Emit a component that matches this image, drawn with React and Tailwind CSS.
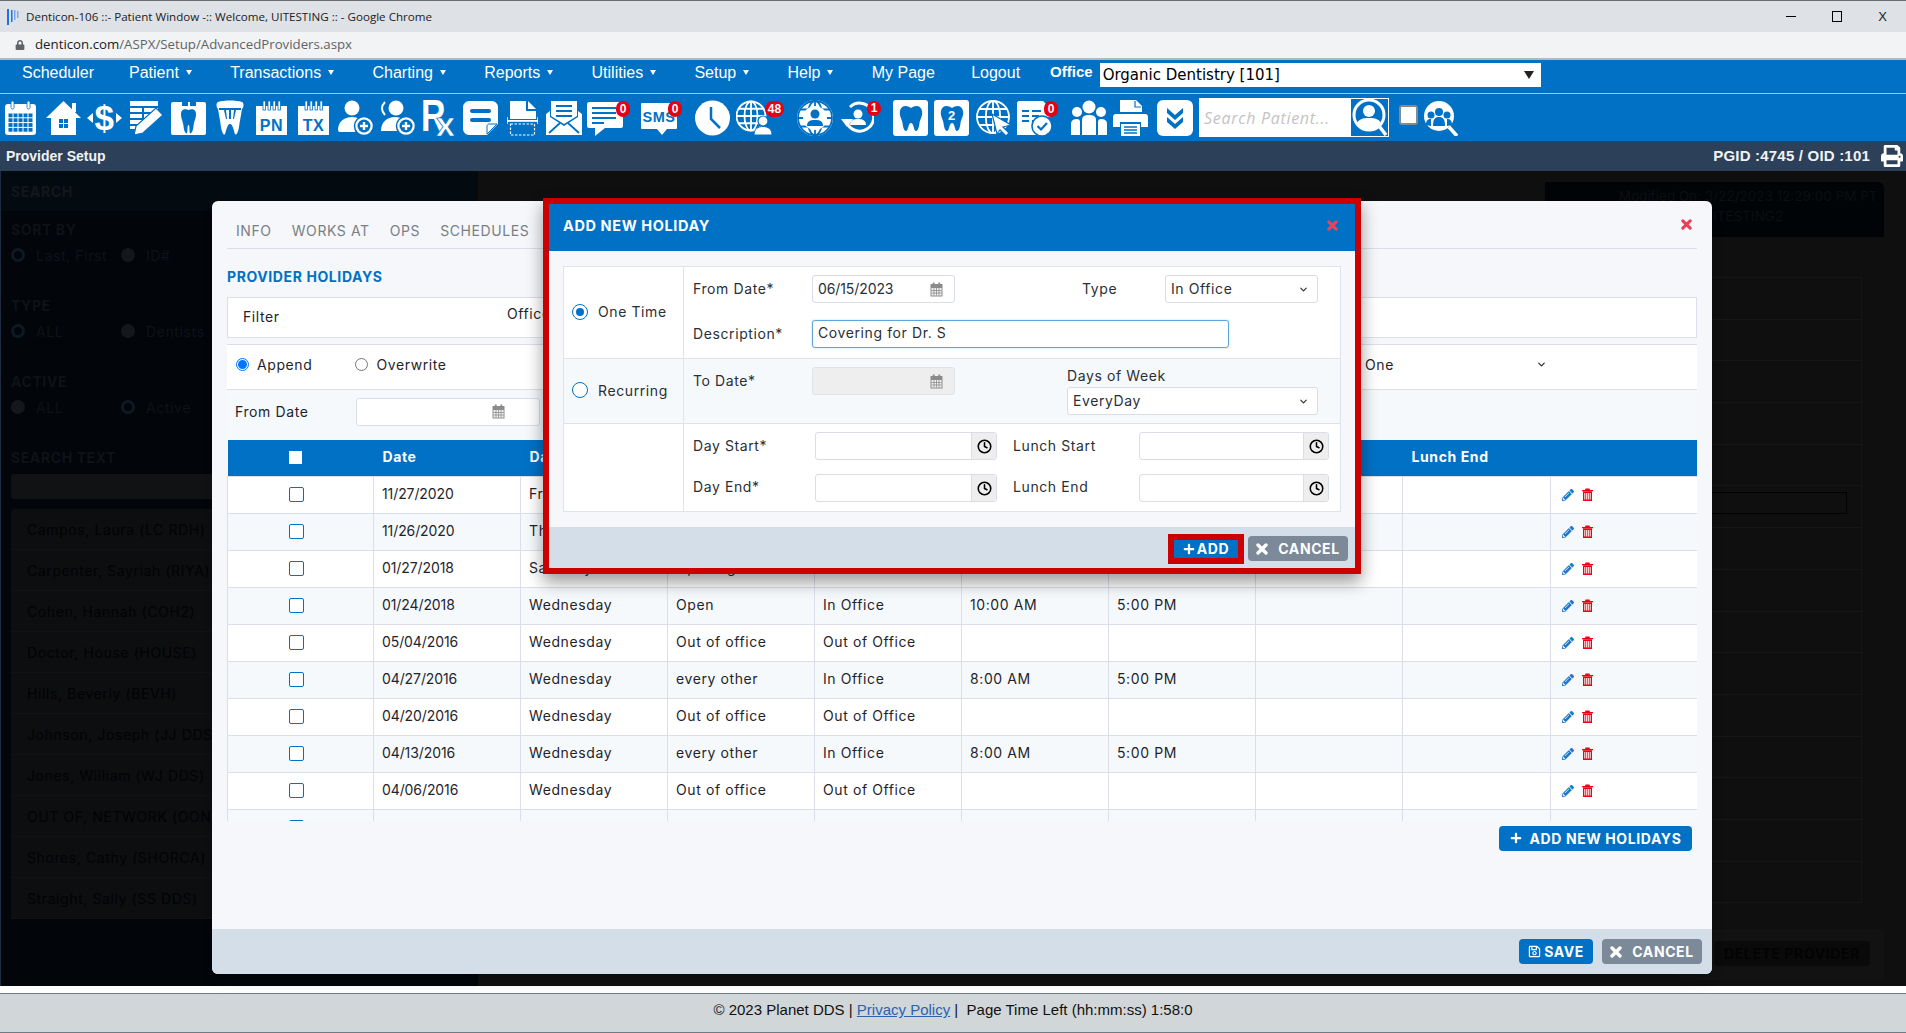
import { Clock, ChevronDown } from 'lucide-react';
import { FaLock, FaPencilAlt, FaPlus, FaRegSave, FaPrint } from 'react-icons/fa';

const BLUE = '#0071c5';

const ROWS = [
  ['11/27/2020', 'Friday', 'Thanksgiving', 'Out of Office', '', ''],
  ['11/26/2020', 'Thursday', 'Thanksgiving', 'Out of Office', '', ''],
  ['01/27/2018', 'Saturday', 'Opening', 'In Office', '9:00 AM', '1:00 PM'],
  ['01/24/2018', 'Wednesday', 'Open', 'In Office', '10:00 AM', '5:00 PM'],
  ['05/04/2016', 'Wednesday', 'Out of office', 'Out of Office', '', ''],
  ['04/27/2016', 'Wednesday', 'every other', 'In Office', '8:00 AM', '5:00 PM'],
  ['04/20/2016', 'Wednesday', 'Out of office', 'Out of Office', '', ''],
  ['04/13/2016', 'Wednesday', 'every other', 'In Office', '8:00 AM', '5:00 PM'],
  ['04/06/2016', 'Wednesday', 'Out of office', 'Out of Office', '', ''],
  ['03/30/2016', 'Wednesday', 'every other', 'In Office', '8:00 AM', '5:00 PM'],
];

const NAV = [
  ['Patient', true],
  ['Transactions', true],
  ['Charting', true],
  ['Reports', true],
  ['Utilities', true],
  ['Setup', true],
  ['Help', true],
  ['My Page', false],
];

const PROVIDERS = [
  'Campos, Laura (LC RDH)',
  'Carpenter, Sayriah (RIYA)',
  'Cohen, Hannah (COH2)',
  'Doctor, House (HOUSE)',
  'Hills, Beverly (BEVH)',
  'Johnson, Joseph (JJ DDS)',
  'Jones, William (WJ DDS)',
  'OUT OF, NETWORK (OON)',
  'Shores, Cathy (SHORCA)',
  'Straight, Sally (SS DDS)',
];

function Ico({ w, className = '', children }) {
  return (
    <svg width={w} height={36} viewBox={`0 0 ${w} 36`} fill="#fff" className={`shrink-0 ${className}`}>
      {children}
    </svg>
  );
}

function Badge({ text, className = '' }) {
  return (
    <span className={`absolute flex h-[14px] min-w-[14px] items-center justify-center rounded-full bg-[#e60012] px-[2px] font-['Liberation_Sans',Arial,sans-serif] text-[12px] font-bold leading-none tracking-normal text-white ${className}`}>
      {text}
    </span>
  );
}

function XIcon({ size = 11, className = '' }) {
  return (
    <svg width={size} height={size} viewBox="0 0 12 12" className={`shrink-0 ${className}`}>
      <path d="M2 2L10 10M10 2L2 10" fill="none" stroke="currentColor" strokeWidth="3.400" strokeLinecap="round" />
    </svg>
  );
}

function TrashIcon() {
  return (
    <svg width="11" height="13" viewBox="0 0 11 13" className="shrink-0">
      <path d="M3.500 0.500H7.500L8 2H11V3.300H0V2H3Z" fill="#f00014" />
      <path d="M1 3.300H10V13H1Z" fill="#f00014" />
      <path d="M2.800 5V11.500M4.700 5V11.500M6.300 5V11.500M8.200 5V11.500" stroke="#fff" strokeWidth="1" />
    </svg>
  );
}

const TOOTH = 'M18 8C14 5 8 5 7 11C6 16 9 19 9.500 23C10 27 11 31 13 31C15.500 31 15 23 18 23C21 23 20.500 31 23 31C25 31 26 27 26.500 23C27 19 30 16 29 11C28 5 22 5 18 8Z';

function CalendarIco(props) {
  const cells = [];
  for (let r = 0; r < 4; r++) {
    for (let c = 0; c < 5; c++) {
      cells.push(<rect key={`${r}-${c}`} x={4.5 + c * 5} y={13.500 + r * 4.800} width="4" height="3.800" fill={BLUE} />);
    }
  }
  return (
    <Ico w={33} {...props}>
      <rect x="1" y="4" width="31" height="31" rx="3" />
      {cells}
      <rect x="7" y="1" width="3" height="8" rx="1.500" stroke={BLUE} strokeWidth="0.800" />
      <rect x="23" y="1" width="3" height="8" rx="1.500" stroke={BLUE} strokeWidth="0.800" />
    </Ico>
  );
}

function PageIco({ label, ...props }) {
  return (
    <Ico w={33} {...props}>
      <path d="M1 6H32V35H1Z" />
      {[7, 12, 17, 22].map((x) => (
        <rect key={x} x={x + 1} y="1" width="2.500" height="9" stroke={BLUE} strokeWidth="0.800" />
      ))}
      <text x="16.500" y="31" textAnchor="middle" fontSize="16" fontWeight="700" fontFamily="Liberation Sans" fill={BLUE}>
        {label}
      </text>
    </Ico>
  );
}

function PersonPlus({ cx, ...rest }) {
  return (
    <g {...rest}>
      <circle cx={cx} cy="26" r="9.500" stroke={BLUE} strokeWidth="1.500" />
      <circle cx={cx} cy="26" r="6.500" fill={BLUE} />
      <rect x={cx - 4} y="24.800" width="8" height="2.400" />
      <rect x={cx - 1.200} y="22" width="2.400" height="8" />
    </g>
  );
}

function GlobeLines({ cx, cy, r, stroke = '#fff', sw = 1.800 }) {
  return (
    <g fill="none" stroke={stroke} strokeWidth={sw}>
      <circle cx={cx} cy={cy} r={r} />
      <ellipse cx={cx} cy={cy} rx={r * 0.45} ry={r} />
      <path d={`M${cx} ${cy - r}V${cy + r}M${cx - r} ${cy}H${cx + r}M${cx - r * 0.86} ${cy - r * 0.5}H${cx + r * 0.86}M${cx - r * 0.86} ${cy + r * 0.5}H${cx + r * 0.86}`} />
    </g>
  );
}

function ToolBar() {
  return (
    <div className="flex h-[47px] shrink-0 items-center bg-[#0071c5]">
      <CalendarIco className="ml-[4px]" />
      {/* home */}
      <Ico w={35} className="ml-[9px]">
        <path d="M17.500 1L35 18H30V35H5V18H0Z" />
        <rect x="26" y="3" width="4" height="9" />
        <path d="M13 19H22V28H13Z" fill={BLUE} />
        <path d="M17 19H18V28H17ZM13 23H22V24H13Z" />
      </Ico>
      {/* billing */}
      <Ico w={35} className="ml-[6px]">
        <text x="17.500" y="30" textAnchor="middle" fontSize="35" fontWeight="700" fontFamily="Liberation Sans">$</text>
        <path d="M0 18L6 13V23ZM35 18L29 13V23Z" />
      </Ico>
      {/* ledger with pencil */}
      <Ico w={36} className="ml-[7px]">
        <path d="M1 1H29V6H1ZM1 8H13V12H1ZM15 8H29V12H15ZM1 14H13V18H1ZM15 14H22L19 18H15ZM1 20H13V24H1ZM1 26H8V29H1Z" />
        <path d="M5 35L7 26L27 8L34 15L14 33Z" stroke={BLUE} strokeWidth="1.200" />
      </Ico>
      {/* tooth chart */}
      <Ico w={35} className="ml-[6px]">
        <rect y="2" width="35" height="33" rx="2" />
        <path d="M11 2H17V6H11ZM19 2H25V6H19Z" fill={BLUE} />
        <path d="M17.500 10C15 8.500 10 8.500 10 14C10 19 12 21 12.500 26C13 32 15 34 16 33C17 31 16 25 17.500 25C19 25 18 31 19 33C20 34 22 32 22.500 26C23 21 25 19 25 14C25 8.500 20 8.500 17.500 10Z" fill={BLUE} />
      </Ico>
      {/* crown */}
      <Ico w={28} className="ml-[10px]">
        <path d="M2 2C8 0 20 0 26 2C28 3 28 7 26 9C25 15 24 20 23 27C22 33 20 36 19 34C18 32 17 24 14 24C11 24 10 32 9 34C8 36 6 33 5 27C4 20 3 15 2 9C0 7 0 3 2 2Z" />
        <path d="M3 8H25V10H3ZM8 10L10 19H11L10 10ZM13 10V19H15V10ZM18 10L17 19H18L20 10Z" fill={BLUE} />
      </Ico>
      <PageIco label="PN" className="ml-[11px]" />
      <PageIco label="TX" className="ml-[9px]" />
      {/* add patient */}
      <Ico w={36} className="ml-[8px]">
        <circle cx="14" cy="8" r="7.500" />
        <path d="M0 30C0 22 6 17 14 17C20 17 24 20 26 24L16 30Z" />
        <rect y="28" width="18" height="4" rx="2" />
        <PersonPlus cx={26} />
      </Ico>
      {/* add family */}
      <Ico w={37} className="ml-[5px]">
        <circle cx="17" cy="8" r="7.500" />
        <path d="M6 2C2 6 2 11 6 15" fill="none" stroke="#fff" strokeWidth="2" />
        <path d="M2 31C2 22 8 17 16 17C22 17 26 20 28 24L18 31Z" />
        <PersonPlus cx={27} />
      </Ico>
      {/* rx */}
      <Ico w={34} className="ml-[5px]">
        <text x="0" y="31" fontSize="44" fontWeight="700" fontFamily="Liberation Sans" textLength="25" lengthAdjust="spacingAndGlyphs">R</text>
        <text x="15" y="35.500" fontSize="34" fontWeight="700" fontFamily="Liberation Sans" stroke={BLUE} strokeWidth="0.700">x</text>
      </Ico>
      {/* note */}
      <Ico w={35} className="ml-[8px]">
        <path d="M6 1H29C32 1 35 4 35 7V24L24 35H6C3 35 0 32 0 29V7C0 4 3 1 6 1Z" />
        <rect x="7" y="9" width="21" height="4" rx="2" fill={BLUE} />
        <rect x="7" y="18" width="21" height="4" rx="2" fill={BLUE} />
        <path d="M24 34V26C24 25 25 24 26 24H34Z" fill="#fff" stroke={BLUE} strokeWidth="1" />
      </Ico>
      {/* scan */}
      <Ico w={31} className="ml-[9px]">
        <path d="M3 1H19V11H29V19H3ZM21 1L29 9H21Z" />
        <rect y="20" width="31" height="1.800" />
        <path d="M0 17V24M31 17V24" stroke="#fff" strokeWidth="1.500" />
        <rect x="3.500" y="24" width="24" height="11" fill="none" stroke="#fff" strokeWidth="1.200" strokeDasharray="2.500 1.500" />
      </Ico>
      {/* mail */}
      <Ico w={36} className="ml-[8px]">
        <path d="M5 1H31V16L18 24L5 16Z" />
        <path d="M10 6H26M10 11H26M10 16H26" stroke={BLUE} strokeWidth="1.800" />
        <path d="M0 14L4 11V17L18 26L32 17V11L36 14V35H0Z" />
        <path d="M3 33L14 23M33 33L22 23" stroke={BLUE} strokeWidth="1.800" />
      </Ico>
      {/* messages */}
      <div className="relative ml-[5px] shrink-0">
        <Ico w={36}>
          <path d="M2 2H34C35 2 36 3 36 4V26C36 27 35 28 34 28H18L8 36V28H2C1 28 0 27 0 26V4C0 3 1 2 2 2Z" />
          <path d="M5 8H29M5 13H29M5 18H29M5 23H17" stroke={BLUE} strokeWidth="2" />
        </Ico>
        <Badge text="0" className="left-[29px] top-[1px] h-[16px] w-[14px]" />
      </div>
      {/* sms */}
      <div className="relative ml-[18px] shrink-0">
        <Ico w={36}>
          <path d="M1 3H35C35.500 3 36 3.500 36 4V28C36 28.500 35.500 29 35 29H26L21 35L16 29H1C0.500 29 0 28.500 0 28V4C0 3.500 0.500 3 1 3Z" />
          <text x="18" y="22" textAnchor="middle" fontSize="14.500" fontWeight="700" fontFamily="Liberation Sans" fill={BLUE}>SMS</text>
        </Ico>
        <Badge text="0" className="left-[27px] top-[1px] h-[16px] w-[14px]" />
      </div>
      {/* clock */}
      <Ico w={35} className="ml-[18px]">
        <circle cx="17.500" cy="18" r="17.500" />
        <path d="M16 7V19L25 28" fill="none" stroke={BLUE} strokeWidth="2.500" />
      </Ico>
      {/* web patient */}
      <div className="relative ml-[6px] shrink-0">
        <Ico w={36}>
          <GlobeLines cx={15} cy={16} r={14.500} />
          <circle cx="27" cy="21" r="5" stroke={BLUE} strokeWidth="1.200" />
          <path d="M18 35C18 29 22 26.500 27 26.500C32 26.500 36 29 36 35Z" stroke={BLUE} strokeWidth="1" />
        </Ico>
        <Badge text="48" className="left-[29px] top-[1px] h-[16px] w-[19px] !text-[12px]" />
      </div>
      {/* web user */}
      <Ico w={36} className="ml-[25px]">
        <circle cx="18" cy="18" r="18" />
        <GlobeLines cx={18} cy={18} r={17} stroke={BLUE} sw={1.800} />
        <circle cx="18" cy="18" r="12" />
        <circle cx="18" cy="14" r="4.500" fill={BLUE} />
        <path d="M10 26C10 21 13 20 18 20C23 20 26 21 26 26Z" fill={BLUE} />
      </Ico>
      {/* recall */}
      <div className="relative ml-[8px] shrink-0">
        <Ico w={33}>
          <path d="M6 23A14 14 0 1 0 9 7" fill="none" stroke="#fff" strokeWidth="3" />
          <path d="M0 19H12L6 27Z" />
          <circle cx="17" cy="14" r="4.500" />
          <path d="M9 25C9 20 13 19 17 19C21 19 25 20 25 25Z" />
        </Ico>
        <Badge text="1" className="left-[26px] top-[1px] h-[15px] w-[12px]" />
      </div>
      {/* tooth */}
      <Ico w={35} className="ml-[19px]">
        <rect y="0" width="35" height="36" rx="3" />
        <path d={TOOTH} fill={BLUE} />
      </Ico>
      {/* tooth 2 */}
      <Ico w={35} className="ml-[6px]">
        <rect y="0" width="35" height="36" rx="3" />
        <path d={TOOTH} fill={BLUE} />
        <text x="18" y="20" textAnchor="middle" fontSize="13" fontWeight="700" fontFamily="Liberation Sans">2</text>
      </Ico>
      {/* web cursor */}
      <Ico w={35} className="ml-[7px]">
        <GlobeLines cx={17} cy={17} r={16} />
        <path d="M16 14L35 25L27 27L33 33L30 36L24 30L21 34Z" stroke={BLUE} strokeWidth="1.200" />
      </Ico>
      {/* claims */}
      <div className="relative ml-[6px] shrink-0">
        <Ico w={36}>
          <path d="M2 1H26L34 9V17H22V35H2C1 35 0 34 0 33V3C0 2 1 1 2 1Z" />
          <rect x="0" y="18" width="24" height="17" />
          <path d="M5 11H12M15 11H24M5 16H12M15 16H22M5 21H12M15 21H20" stroke={BLUE} strokeWidth="2.200" />
          <circle cx="25" cy="26" r="10" stroke={BLUE} strokeWidth="1.500" />
          <path d="M20.500 26L24 29.500L30 23" fill="none" stroke={BLUE} strokeWidth="2.200" />
        </Ico>
        <Badge text="0" className="left-[27px] top-[1px] h-[16px] w-[14px]" />
      </div>
      {/* people */}
      <Ico w={36} className="ml-[18px]">
        <circle cx="6" cy="12" r="5" />
        <circle cx="30" cy="12" r="5" />
        <circle cx="18" cy="7" r="6.500" />
        <path d="M0 35V24C0 20 3 19 6 19C8 19 9 20 9 22V35Z" />
        <path d="M36 35V24C36 20 33 19 30 19C28 19 27 20 27 22V35Z" />
        <path d="M11 35V20C11 16 14 15 18 15C22 15 25 16 25 20V35Z" />
      </Ico>
      {/* print */}
      <Ico w={35} className="ml-[6px]">
        <path d="M7 0H23L29 6V12H7Z" />
        <path d="M22 1V7H28" fill="none" stroke={BLUE} strokeWidth="1.200" />
        <path d="M3 14H32C34 14 35 15 35 17V27H28V22H7V27H0V17C0 15 1 14 3 14Z" />
        <path d="M8 24H27V36H8Z" />
        <path d="M11 27H24M11 30H24M11 33H24" stroke={BLUE} strokeWidth="1.500" />
      </Ico>
      {/* more */}
      <Ico w={36} className="ml-[9px]">
        <rect y="0" width="36" height="36" rx="6" />
        <path d="M10 8L18 15L26 8V13L18 20L10 13Z" fill={BLUE} />
        <path d="M10 17L18 24L26 17V22L18 29L10 22Z" fill={BLUE} />
      </Ico>
      {/* patient search */}
      <div className="ml-[6px] flex h-[39px] w-[190px] shrink-0 items-center bg-white">
        <span className="flex-1 truncate pl-[5px] font-['Open_Sans',sans-serif] text-[16px] italic tracking-[0.7px] text-[#c4c4c4]">Search Patient...</span>
        <div className="mr-[1px] h-[37px] w-[37px] bg-[#0071c5]">
          <svg width="37" height="37" viewBox="0 0 37 37" fill="#fff">
            <circle cx="18" cy="16" r="15" fill="none" stroke="#fff" strokeWidth="3" />
            <circle cx="18" cy="12" r="6" />
            <path d="M6 25C7 20 12 19 18 19C24 19 29 20 30 25L24 30H12Z" />
            <path d="M28 27L35 36" stroke="#fff" strokeWidth="3.500" />
          </svg>
        </div>
      </div>
      <div className="ml-[10px] mb-[6px] h-[20px] w-[19px] shrink-0 rounded-[3px] border-2 border-[#7f8c96] bg-white" />
      {/* group search */}
      <Ico w={38} className="ml-[4px]">
        <circle cx="17" cy="16" r="15" />
        <circle cx="17" cy="12" r="4" fill={BLUE} />
        <circle cx="9" cy="15" r="3.500" fill={BLUE} />
        <circle cx="25" cy="15" r="3.500" fill={BLUE} />
        <path d="M11 26C11 19 13 17 17 17C21 17 23 19 23 26Z" fill={BLUE} />
        <path d="M4 25C4 20 6 19 9 19V26ZM30 25C30 20 28 19 25 19V26Z" fill={BLUE} />
        <path d="M27 27L35 36" stroke="#fff" strokeWidth="3.500" />
      </Ico>
    </div>
  );
}

function DimRadio({ label, on }) {
  return (
    <div className="flex h-[22px] w-[110px] items-center gap-[11px]">
      <span className={`h-[14px] w-[14px] shrink-0 rounded-full ${on ? 'border-[3px] border-[#0d1a24] bg-[#02050a]' : 'bg-[#14181c]'}`} />
      <span className="text-[#0f1216]">{label}</span>
    </div>
  );
}

function LeftPanel() {
  return (
    <div className="w-[478px] shrink-0 border-l border-[#1b2c40] bg-[#02050a] text-[14px] font-normal text-[#0f1216]">
      <div className="flex h-[40px] items-center bg-[#030a10] pl-[10px] font-bold text-[#12171c]">SEARCH</div>
      <div className="pl-[10px]">
        <div className="mt-[8px] h-[22px] font-bold leading-[22px]">SORT BY</div>
        <div className="mt-[3px] flex"><DimRadio label="Last, First" on /><DimRadio label="ID#" /></div>
        <div className="mt-[29px] h-[22px] font-bold leading-[22px]">TYPE</div>
        <div className="mt-[3px] flex"><DimRadio label="ALL" on /><DimRadio label="Dentists" /></div>
        <div className="mt-[29px] h-[22px] font-bold leading-[22px]">ACTIVE</div>
        <div className="mt-[3px] flex"><DimRadio label="ALL" /><DimRadio label="Active" on /></div>
        <div className="mt-[29px] h-[22px] font-bold leading-[22px]">SEARCH TEXT</div>
      </div>
      <div className="ml-[10px] mt-[5px] h-[25px] w-[450px] rounded-[3px] bg-[#101214]" />
      <div className="ml-[10px] mt-[10px] w-[450px] rounded-[4px] bg-[#0c0e10]">
        {PROVIDERS.map((p) => (
          <div key={p} className="flex h-[41px] items-center border-b border-[#101214] pl-[16px] text-[#020304]">{p}</div>
        ))}
      </div>
    </div>
  );
}

function RightPanel() {
  return (
    <div className="relative flex-1 bg-[#0f0f0f]">
      {/* top banner behind the modal */}
      <div className="absolute left-[1067px] top-[11px] flex h-[55px] w-[339px] flex-col justify-center rounded-tr-[6px] bg-[#010407] pb-[7px] pl-[74px] text-[13.500px] tracking-normal text-[#0c0e10]">
        <div>Modified On: 3/22/2023 12:29:00 PM PT</div>
        <div>Modified By: UITESTING2</div>
      </div>
      <div className="absolute left-[1234px] top-[106px] w-[150px] border-r border-b border-[#161616]">
        {[0, 1, 2, 3, 4, 5, 6, 7, 8, 9, 10, 11, 12, 13, 14].map((n) => (
          <div key={n} className="h-[41.700px] border-t border-[#161616]" />
        ))}
      </div>
      <div className="absolute left-[1230px] top-[321px] h-[22px] w-[139px] border border-[#020202]" />
      <div className="absolute left-[1200px] top-[758px] h-[51px] w-[206px] rounded-[4px] bg-[#121212]" />
      <div className="absolute left-[1236px] top-[770px] flex h-[25px] w-[156px] items-center justify-center rounded-[4px] bg-[#0a0a0a] text-[14px] font-bold text-[#030303]">DELETE PROVIDER</div>
    </div>
  );
}

function CalIcon({ className = '' }) {
  return (
    <svg width="13" height="15" viewBox="0 0 13 15" className={className}>
      <rect x="0.500" y="2" width="12" height="12.500" fill="#8b8b8b" rx="0.500" />
      <path d="M1.500 6H11.500V13.500H1.500Z" fill="#f2f2f2" />
      <path d="M1.500 8.500H11.500M1.500 11H11.500M4 6V13.500M6.500 6V13.500M9 6V13.500" stroke="#8b8b8b" strokeWidth="0.800" />
      <rect x="2.800" y="0.500" width="1.800" height="3.500" fill="#8b8b8b" />
      <rect x="8.400" y="0.500" width="1.800" height="3.500" fill="#8b8b8b" />
    </svg>
  );
}

function BigRadio({ on }) {
  return (
    <span className="flex h-[16px] w-[16px] shrink-0 items-center justify-center rounded-full border border-[#0071c5] bg-white">
      {on && <span className="h-[8px] w-[8px] rounded-full bg-[#0071c5]" />}
    </span>
  );
}

function TimeInput({ className }) {
  return (
    <div className={`flex h-[28px] overflow-hidden rounded-[3px] border border-[#d9dde8] bg-white ${className}`}>
      <div className="flex-1" />
      <div className="flex w-[25px] items-center justify-center border-l border-[#d9dde8] bg-[#eeeeee]">
        <Clock size={15} strokeWidth={2.500} className="text-black" />
      </div>
    </div>
  );
}

function HolidayDialog() {
  return (
    <div className="absolute left-[331px] top-[-3px] z-10 w-[818px] border-[6px] border-[#cc0000] bg-[#f5f7fa] text-[14px] text-[#2a2f36] shadow-[0_8px_16px_rgba(0,0,0,0.4)]">
      <div className="flex h-[47px] items-center justify-between bg-[#0071c5] pb-[4px] pl-[14px] pr-[17px] text-[14.500px] font-bold text-white">
        <span>ADD NEW HOLIDAY</span>
        <XIcon size={11} className="text-[#f0405c]" />
      </div>
      <div className="px-[14px] py-[15px]">
        <div className="border border-[#dfe3ec]">
          <div className="flex h-[92px] border-b border-[#dfe3ec] bg-white">
            <div className="flex w-[120px] shrink-0 items-center gap-[10px] border-r border-[#dfe3ec] pb-[2px] pl-[8px]">
              <BigRadio on />
              <span>One Time</span>
            </div>
            <div className="pl-[9px] pt-[8px]">
              <div className="flex h-[28px] items-center">
                <span className="w-[119px] pb-[2px]">From Date*</span>
                <div className="flex h-[28px] w-[143px] items-center justify-between rounded-[3px] border border-[#d9dde8] bg-white pl-[5px] pr-[11px]">
                  <span className="pb-[2px] tracking-[-0.100px]">06/15/2023</span>
                  <CalIcon />
                </div>
                <span className="ml-[127px] w-[83px] pb-[2px]">Type</span>
                <div className="flex h-[28px] w-[153px] items-center justify-between rounded-[3px] border border-[#d9dde8] bg-white pl-[5px] pr-[8px]">
                  <span className="pb-[2px]">In Office</span>
                  <ChevronDown size={11} strokeWidth={2.500} />
                </div>
              </div>
              <div className="mt-[17px] flex h-[28px] items-center">
                <span className="w-[119px] pb-[2px]">Description*</span>
                <div className="flex h-[28px] w-[417px] items-center rounded-[3px] border border-[#5fa5dc] bg-white pb-[3px] pl-[5px] shadow-[0_0_2px_rgba(0,113,197,0.3)]">Covering for Dr. S</div>
              </div>
            </div>
          </div>
          <div className="flex h-[65px] border-b border-[#dfe3ec] bg-[#f5f9fc]">
            <div className="flex w-[120px] shrink-0 items-center gap-[10px] border-r border-[#dfe3ec] pb-[2px] pl-[8px]">
              <BigRadio />
              <span>Recurring</span>
            </div>
            <div className="flex pl-[9px] pt-[8px]">
              <div className="flex h-[28px] items-center">
                <span className="w-[119px] pb-[2px]">To Date*</span>
                <div className="flex h-[28px] w-[143px] items-center justify-end rounded-[3px] border border-[#dfe3ec] bg-[#eeeeee] pr-[11px]">
                  <CalIcon />
                </div>
              </div>
              <div className="ml-[112px] w-[251px]">
                <div className="h-[20px] leading-[18px]">Days of Week</div>
                <div className="flex h-[28px] items-center justify-between rounded-[3px] border border-[#d9dde8] bg-white pl-[5px] pr-[8px]">
                  <span className="pb-[2px]">EveryDay</span>
                  <ChevronDown size={11} strokeWidth={2.500} />
                </div>
              </div>
            </div>
          </div>
          <div className="flex h-[87px] bg-white">
            <div className="w-[120px] shrink-0 border-r border-[#dfe3ec]" />
            <div className="pl-[9px] pt-[8px]">
              <div className="flex h-[28px] items-center">
                <span className="w-[122px] pb-[2px]">Day Start*</span>
                <TimeInput className="w-[182px]" />
                <span className="ml-[16px] w-[126px] pb-[2px]">Lunch Start</span>
                <TimeInput className="w-[190px]" />
              </div>
              <div className="mt-[14px] flex h-[28px] items-center">
                <span className="w-[122px] pb-[3px]">Day End*</span>
                <TimeInput className="w-[182px]" />
                <span className="ml-[16px] w-[126px] pb-[3px]">Lunch End</span>
                <TimeInput className="w-[190px]" />
              </div>
            </div>
          </div>
        </div>
      </div>
      <div className="flex h-[41px] items-center justify-end gap-[4px] bg-[#d4dee8] pr-[7px] pt-[2px] font-bold">
        <button type="button" className="flex h-[30px] w-[76px] items-center justify-center gap-[2px] border-[6px] border-[#cc0000] bg-[#0071c5] text-[14px] text-white">
          <FaPlus size={12} />
          ADD
        </button>
        <button type="button" className="flex h-[25px] w-[100px] items-center justify-center gap-[10px] rounded-[4px] bg-[#7b8998] text-[14px] text-white">
          <XIcon size={12} />
          CANCEL
        </button>
      </div>
    </div>
  );
}

function ProviderModal() {
  return (
    <div className="absolute left-[212px] top-[30px] flex h-[773px] w-[1500px] flex-col rounded-[6px] bg-[#f5f7fa] text-[14px] text-[#1f242b] shadow-lg">
      <div className="mx-[15px] flex h-[48px] shrink-0 items-center justify-between border-b border-[#dcdfea] pt-[12px]">
        <div className="flex gap-[20px] pl-[9px] text-[#7a7f86]">
          <span>INFO</span>
          <span>WORKS AT</span>
          <span>OPS</span>
          <span>SCHEDULES</span>
        </div>
        <XIcon size={11} className="mb-[13px] mr-[5px] text-[#e8405a]" />
      </div>
      <div className="mx-[15px] mt-[19px] text-[14px] font-bold leading-[17px] text-[#0071c5]">PROVIDER HOLIDAYS</div>
      <div className="mx-[15px] mt-[12px] flex h-[41px] shrink-0 items-center border border-[#dcdfea] bg-white pb-[2px] pl-[15px]">
        <span className="w-[264px]">Filter</span>
        <span className="mb-[6px]">Office</span>
      </div>
      <div className="mx-[15px] mt-[6px] flex h-[46px] shrink-0 items-center border-y border-[#dcdfea] bg-white pb-[5px] pl-[9px]">
        <span className="flex h-[13px] w-[13px] items-center justify-center rounded-full border border-[#0075ff] bg-white">
          <span className="h-[9px] w-[9px] rounded-full bg-[#0075ff]" />
        </span>
        <span className="ml-[8px]">Append</span>
        <span className="ml-[43px] h-[13px] w-[13px] rounded-full border border-[#767676] bg-white" />
        <span className="ml-[8px]">Overwrite</span>
        <span className="ml-[869px] w-[220px]">Select One</span>
        <ChevronDown size={11} strokeWidth={2.500} />
      </div>
      <div className="mx-[15px] flex h-[50px] shrink-0 items-center bg-[#f5f9fc] pb-[7px] pl-[8px]">
        <span className="w-[121px]">From Date</span>
        <div className="flex h-[28px] w-[184px] items-center justify-end rounded-[3px] border border-[#dcdfea] bg-white pr-[34px]">
          <CalIcon />
        </div>
      </div>
      <div className="mx-[15px] h-[381px] shrink-0 overflow-hidden">
        <table className="w-[1470px] table-fixed border-collapse">
          <colgroup>
            <col className="w-[146px]" />
            <col className="w-[147px]" />
            <col className="w-[147px]" />
            <col className="w-[147px]" />
            <col className="w-[147px]" />
            <col className="w-[147px]" />
            <col className="w-[147px]" />
            <col className="w-[147px]" />
            <col className="w-[148px]" />
            <col className="w-[147px]" />
          </colgroup>
          <thead>
            <tr className="h-[36px] bg-[#0071c5] text-left font-bold text-white">
              <th className="pl-[61px]"><span className="block h-[13px] w-[13px] bg-white" /></th>
              <th className="pb-[2px] pl-[9px]">Date</th>
              <th className="pb-[2px] pl-[9px]">Day</th>
              <th className="pb-[2px] pl-[9px]">Description</th>
              <th className="pb-[2px] pl-[9px]">Type</th>
              <th className="pb-[2px] pl-[9px]">Day Start</th>
              <th className="pb-[2px] pl-[9px]">Day End</th>
              <th className="pb-[2px] pl-[9px]">Lunch Start</th>
              <th className="pb-[2px] pl-[9px]">Lunch End</th>
              <th />
            </tr>
          </thead>
          <tbody>
            {ROWS.map((row, i) => (
              <tr key={row[0]} className={`h-[37px] ${i % 2 === 0 ? 'bg-white' : 'bg-[#f5f9fc]'}`}>
                <td className="border border-[#dcdfea] pl-[61px]">
                  <span className="block h-[15px] w-[15px] rounded-[2px] border-[1.500px] border-[#0071c5] bg-white" />
                </td>
                {row.map((cell, j) => (
                  <td key={j} className={`border border-[#dcdfea] pb-[3px] pl-[8px] ${j === 0 ? 'tracking-[-0.100px]' : ''}`}>{cell}</td>
                ))}
                <td className="border border-[#dcdfea]" />
                <td className="border border-[#dcdfea]" />
                <td className="border border-[#dcdfea] pl-[11px]">
                  <span className="flex items-center gap-[8px]">
                    <FaPencilAlt size={12} className="text-[#1f78c8]" />
                    <TrashIcon />
                  </span>
                </td>
              </tr>
            ))}
          </tbody>
        </table>
      </div>
      <div className="mx-[20px] mt-[5px] flex shrink-0 justify-end">
        <button type="button" className="flex h-[25px] w-[193px] items-center justify-center gap-[8px] rounded-[4px] bg-[#0071c5] pb-[1px] font-bold text-white">
          <FaPlus size={12} />
          ADD NEW HOLIDAYS
        </button>
      </div>
      <div className="flex-1" />
      <div className="flex h-[45px] shrink-0 items-center justify-end gap-[9px] rounded-b-[6px] bg-[#d4dee8] pr-[10px] font-bold text-white">
        <button type="button" className="flex h-[25px] w-[74px] items-center justify-center gap-[3px] rounded-[4px] bg-[#0071c5]">
          <FaRegSave size={13} />
          SAVE
        </button>
        <button type="button" className="flex h-[25px] w-[100px] items-center justify-center gap-[10px] rounded-[4px] bg-[#7b8998]">
          <XIcon size={12} />
          CANCEL
        </button>
      </div>
      <HolidayDialog />
    </div>
  );
}

export default function App() {
  return (
    <div className="flex h-[1033px] w-[1906px] flex-col overflow-hidden bg-white font-['Inter',sans-serif] tracking-[0.6px]">
      {/* browser chrome */}
      <div className="flex h-[32px] shrink-0 items-center border-t border-[#6b6e72] bg-[#dee1e6] font-['Open_Sans',sans-serif] text-[11.600px] tracking-normal text-[#222]">
        <svg width="13" height="18" viewBox="0 0 13 18" className="ml-[7px]">
          <rect x="0" y="1" width="2" height="16" fill="#1a73e8" />
          <rect x="4" y="2" width="1.500" height="12" fill="#1a73e8" />
          <rect x="7" y="2" width="1.500" height="10" fill="#7aa9e8" />
          <rect x="10" y="3" width="1.500" height="7" fill="#7aa9e8" />
        </svg>
        <span className="ml-[6px]">Denticon-106 ::- Patient Window -:: Welcome, UITESTING :: - Google Chrome</span>
        <div className="ml-auto flex items-center gap-[36px] pr-[19px]">
          <span className="h-[1px] w-[10px] bg-black" />
          <span className="h-[11px] w-[10px] border border-black" />
          <span className="font-['Liberation_Sans',sans-serif] text-[13px]">X</span>
        </div>
      </div>
      <div className="flex h-[28px] shrink-0 items-center border-b-2 border-[#b4b7bb] bg-[#f1f3f4] pl-[15px] font-['Open_Sans',sans-serif] text-[13.250px] tracking-normal">
        <FaLock size={10} className="text-[#5f6368]" />
        <span className="ml-[10px] text-[#202124]">denticon.com</span>
        <span className="text-[#5f6368]">/ASPX/Setup/AdvancedProviders.aspx</span>
      </div>

      {/* main nav */}
      <div className="flex h-[34px] shrink-0 items-center border-b border-[#9ec8e8] bg-[#0071c5] pb-[8px] pl-[22px] font-['Liberation_Sans',Arial,sans-serif] text-[16px] tracking-normal text-white">
        <span className="mr-[35px]">Scheduler</span>
        <div className="flex items-center gap-[38.300px]">
          {NAV.map(([label, caret]) => (
            <span key={label} className="flex items-center gap-[7px]">
              {label}
              {caret && (
                <svg width="6" height="5" viewBox="0 0 6 5" fill="#fff"><path d="M0 0H6L3 5Z" /></svg>
              )}
            </span>
          ))}
          <span className="-ml-[2px]">Logout</span>
        </div>
        <span className="ml-[30px] text-[15px] font-bold">Office</span>
        <div className="-mb-[5px] ml-[7px] flex h-[24px] w-[441px] items-center justify-between bg-white pl-[3px] pr-[7px] font-['DejaVu_Sans',sans-serif] text-[15px] text-black">
          <span>Organic Dentistry [101]</span>
          <svg width="10" height="8" viewBox="0 0 10 8" fill="#222"><path d="M0 0H10L5 8Z" /></svg>
        </div>
      </div>

      <ToolBar />

      <div className="flex h-[30px] shrink-0 items-center justify-between bg-[#2d4059] pl-[6px] pr-[3px] font-['Liberation_Sans',Arial,sans-serif] text-[14px] font-bold tracking-normal text-[#f0f2f4]">
        <span>Provider Setup</span>
        <span className="flex items-center gap-[11px] text-[15px] tracking-[0.200px]">
          PGID :4745 / OID :101
          <FaPrint size={22} className="text-white" />
        </span>
      </div>

      <div className="relative flex min-h-0 flex-1">
        <LeftPanel />
        <RightPanel />
        <ProviderModal />
      </div>

      {/* page footer */}
      <div className="h-[7px] shrink-0 bg-white" />
      <div className="flex h-[40px] shrink-0 items-center justify-center border-y border-[#6f7b84] bg-[#d1d6d9] pb-[5px] font-['Liberation_Sans',Arial,sans-serif] text-[15px] tracking-normal text-[#111]">
        <span>© 2023 Planet DDS |&nbsp;</span>
        <span className="text-[#2a63b0] underline">Privacy Policy</span>
        <span>&nbsp;|&nbsp; Page Time Left (hh:mm:ss) 1:58:0</span>
      </div>
    </div>
  );
}
